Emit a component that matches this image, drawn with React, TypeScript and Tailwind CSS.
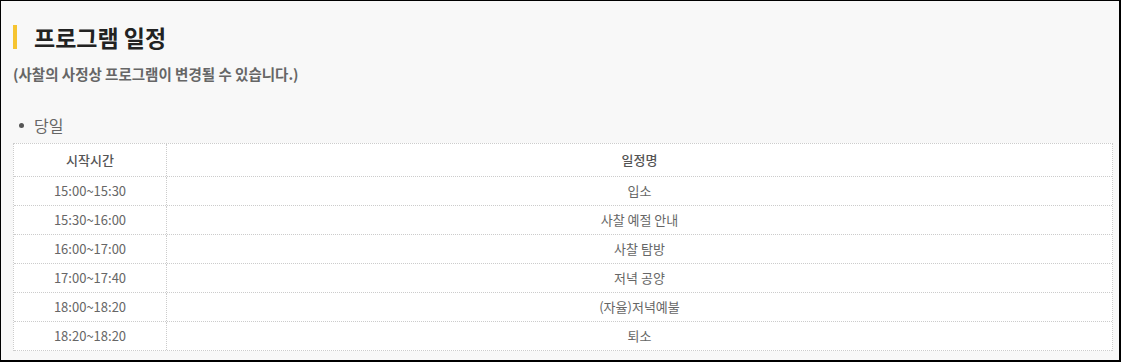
import React from 'react';

const rows = [
  { time: '15:00~15:30', name: '입소' },
  { time: '15:30~16:00', name: '사찰 예절 안내' },
  { time: '16:00~17:00', name: '사찰 탐방' },
  { time: '17:00~17:40', name: '저녁 공양' },
  { time: '18:00~18:20', name: '(자율)저녁예불' },
  { time: '18:20~18:20', name: '퇴소' },
];

const font = { fontFamily: '"Noto Sans CJK KR", "Noto Sans", sans-serif' };

const App: React.FC = () => {
  return (
    <div
      className="w-[1121px] h-[362px] box-border bg-[#f8f8f8] border-l border-t border-r-2 border-b-2 border-black pl-[12px] pt-[24px] overflow-hidden"
      style={font}
    >
      <div className="flex items-center h-[24px]">
        <div className="w-[4px] h-[24px] bg-[#f6c431]" />
        <h2 className="ml-[17px] text-[23px] leading-[24px] font-bold text-[#222]">프로그램 일정</h2>
      </div>

      <p className="mt-[15px] text-[14.5px] leading-[20px] font-semibold text-[#666]">
        (사찰의 사정상 프로그램이 변경될 수 있습니다.)
      </p>

      <div className="mt-[29px] flex items-center h-[24px] text-[16px] text-[#666]">
        <span className="ml-[6px] w-[5px] h-[5px] rounded-full bg-[#555]" />
        <span className="ml-[10px]">당일</span>
      </div>

      <div className="mt-[6px] w-[1100px] bg-white border-t border-l border-r border-dotted border-[#ccc] text-[13px] text-[#666]">
        <div className="flex h-[33px] border-b border-dotted border-[#ccc] font-medium text-[#555]">
          <div className="w-[153px] flex items-center justify-center border-r border-dotted border-[#ccc]">시작시간</div>
          <div className="flex-1 flex items-center justify-center">일정명</div>
        </div>
        {rows.map((r) => (
          <div key={r.time} className="flex h-[29px] border-b border-dotted border-[#ccc]">
            <div className="w-[153px] flex items-center justify-center border-r border-dotted border-[#ccc]">{r.time}</div>
            <div className="flex-1 flex items-center justify-center">{r.name}</div>
          </div>
        ))}
      </div>
    </div>
  );
};

export default App;
